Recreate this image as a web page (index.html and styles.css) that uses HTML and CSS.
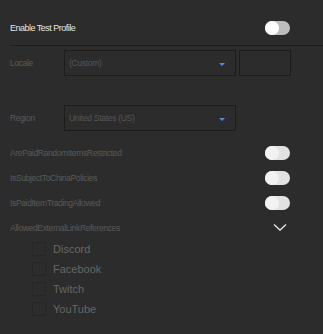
FILE: index.html
```html
<!DOCTYPE html>
<html lang="en">
<head>
    <meta charset="UTF-8">
    <title>Test Profile</title>
    <link rel="stylesheet" href="styles.css">
</head>
<body>
    <div class="panel">
        <!-- top switch -->
        <div class="row head">
            <span class="label bright">Enable Test Profile</span>
            <span class="toggle on"><span class="knob"></span></span>
        </div>
        <div class="divider"></div>

        <div class="row field locale">
            <span class="label">Locale</span>
            <div class="select">
                <span>(Custom)</span>
                <span class="caret"></span>
            </div>
            <div class="box"></div>
        </div>

        <div class="row field region">
            <span class="label">Region</span>
            <div class="select">
                <span>United States (US)</span>
                <span class="caret"></span>
            </div>
        </div>

        <div class="flags">
            <div class="row flag">
                <span class="label">ArePaidRandomItemsRestricted</span>
                <span class="toggle off"><span class="knob"></span></span>
            </div>
            <div class="row flag">
                <span class="label">IsSubjectToChinaPolicies</span>
                <span class="toggle off"><span class="knob"></span></span>
            </div>
            <div class="row flag">
                <span class="label">IsPaidItemTradingAllowed</span>
                <span class="toggle off"><span class="knob"></span></span>
            </div>
            <div class="row flag">
                <span class="label">AllowedExternalLinkReferences</span>
                <svg class="chevron" width="14" height="9" viewBox="0 0 14 9">
                    <path d="M1 1.5 L7 7 L13 1.5" fill="none" stroke="#e8e8e8" stroke-width="1.3"/>
                </svg>
            </div>
        </div>

        <ul class="links">
            <li><span class="check"></span>Discord</li>
            <li><span class="check"></span>Facebook</li>
            <li><span class="check"></span>Twitch</li>
            <li><span class="check"></span>YouTube</li>
        </ul>
    </div>
</body>
</html>
```

FILE: styles.css
```css
html, body {
    margin: 0;
    padding: 0;
    background-color: #2c2c2c;
}
body {
    font-family: "Liberation Sans", Arial, sans-serif;
    width: 323px;
    height: 334px;
    overflow: hidden;
}
.panel {
    padding-top: 21px;
    padding-left: 10px;
}
.row {
    display: flex;
    align-items: center;
}
.label {
    font-size: 8.5px;
    letter-spacing: -0.35px;
    color: #5a5a5a;
}
.label.bright {
    font-size: 9px;
    letter-spacing: -0.5px;
    color: #e4e4e4;
}
.head {
    height: 14px;
    justify-content: space-between;
    padding-right: 33px;
}
.divider {
    height: 1px;
    background-color: #1d1d1d;
    margin-top: 10px;
}
.field {
    margin-top: 4px;
}
.field .label {
    width: 54px;
}
.select {
    box-sizing: border-box;
    width: 172px;
    height: 26px;
    border: 1px solid #1d1d1d;
    display: flex;
    align-items: center;
    justify-content: space-between;
    padding: 0 10px 0 4px;
    font-size: 8.5px;
    letter-spacing: -0.3px;
    color: #565656;
}
.caret {
    width: 0;
    height: 0;
    border-left: 3px solid transparent;
    border-right: 3px solid transparent;
    border-top: 3px solid #4a8ee6;
    margin-top: 2px;
}
.box {
    box-sizing: border-box;
    width: 52px;
    height: 26px;
    border: 1px solid #1d1d1d;
    margin-left: 3px;
}
.region {
    margin-top: 29px;
}
.flags {
    margin-top: 9px;
    padding-right: 33px;
}
.flag {
    height: 25px;
    justify-content: space-between;
}
.toggle {
    position: relative;
    width: 25px;
    height: 14px;
    border-radius: 7px;
    background-color: #bdbdbd;
}
.toggle .knob {
    position: absolute;
    left: 0;
    top: 0;
    width: 14px;
    height: 14px;
    border-radius: 50%;
    background-color: #fff;
}
.toggle.off {
    background-color: #e2e2e2;
}
.toggle.off .knob {
    background-color: #f2f2f2;
}
.chevron {
    margin-right: 3px;
}
.links {
    list-style: none;
    margin: -1px 0 0;
    padding: 0 0 0 22px;
}
.links li {
    display: flex;
    align-items: center;
    height: 20px;
    font-size: 11px;
    color: #666;
}
.check {
    box-sizing: border-box;
    width: 14px;
    height: 14px;
    border: 1px solid #262626;
    margin-right: 7px;
}
```
